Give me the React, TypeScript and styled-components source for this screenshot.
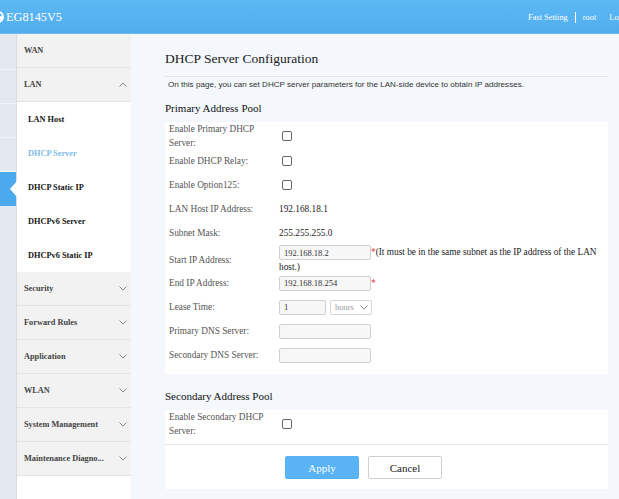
import styled, { createGlobalStyle } from "styled-components";

const GlobalStyle = createGlobalStyle`
  html, body {
    margin: 0;
    padding: 0;
  }
  body {
    background: #f4f7fb;
    font-family: "Liberation Serif", "Times New Roman", serif;
    overflow: hidden;
  }
  * {
    box-sizing: border-box;
  }
`;

const Page = styled.div`
  width: 619px;
  height: 499px;
  display: flex;
  flex-direction: column;
  overflow: hidden;
`;

const Header = styled.header`
  height: 34px;
  flex-shrink: 0;
  display: flex;
  align-items: center;
  background: linear-gradient(#5cb9f4, #51aced);
  box-shadow: inset 0 -1px 0 #6dbdf2;
  color: #fff;
  overflow: hidden;
`;

const Logo = styled.div`
  display: flex;
  align-items: center;
  font-size: 12.3px;
  svg {
    margin-left: -8px;
    margin-right: 2px;
  }
`;

const HeaderLinks = styled.div`
  margin-left: auto;
  margin-right: -21px;
  display: flex;
  align-items: center;
  font-size: 8.4px;
  white-space: nowrap;
`;

const HeaderLink = styled.span`
  padding: 0 6.5px;
`;

const Sep = styled.span`
  width: 1px;
  height: 11px;
  margin-left: 1px;
  background: #fff;
`;

const Body = styled.div`
  flex: 1;
  display: flex;
  min-height: 0;
`;

const Strip = styled.div`
  width: 17px;
  flex-shrink: 0;
  padding-top: 2px;
  background: #e3e9ee;
  border-right: 1px solid #d6dde3;
`;

const StripTile = styled.div<{ $active?: boolean }>`
  position: relative;
  height: 34px;
  border-bottom: 1px solid ${(p) => (p.$active ? "#4aa8ec" : "#f2f5f8")};
  background: ${(p) => (p.$active ? "#4ba9ee" : "transparent")};
`;

const Notch = styled.span`
  position: absolute;
  right: -1px;
  top: 50%;
  transform: translateY(-50%);
  border-right: 7px solid #fff;
  border-top: 8px solid transparent;
  border-bottom: 8px solid transparent;
`;

const Sidebar = styled.nav`
  width: 114px;
  flex-shrink: 0;
  background: #fff;
  display: flex;
  flex-direction: column;
`;

const MenuGroup = styled.div`
  height: 34px;
  flex-shrink: 0;
  display: flex;
  align-items: center;
  justify-content: space-between;
  padding: 0 4px 0 7px;
  background: #f2f2f2;
  border-bottom: 1px solid #e4e4e4;
  font-size: 8.3px;
  font-weight: bold;
  color: #444;
  white-space: nowrap;
`;

const SubItem = styled.div<{ $active?: boolean }>`
  height: 34px;
  flex-shrink: 0;
  display: flex;
  align-items: center;
  padding-left: 11px;
  font-size: 8.3px;
  font-weight: bold;
  color: ${(p) => (p.$active ? "#7dbbea" : "#141414")};
`;

const Main = styled.main`
  flex: 1;
  padding: 16px 11px 0 34px;
  background: #f4f7fb;
  overflow: hidden;
`;

const Title = styled.h1`
  margin: 0;
  padding-bottom: 8px;
  border-bottom: 1px solid #e1e5ea;
  font-size: 13.5px;
  line-height: 18px;
  font-weight: normal;
  color: #222;
`;

const Desc = styled.p`
  margin: 2px 0 0;
  padding-left: 3px;
  font-family: "Liberation Sans", Arial, sans-serif;
  font-size: 8.1px;
  line-height: 12px;
  color: #333;
`;

const SectionTitle = styled.h2<{ $top: number }>`
  margin: ${(p) => p.$top}px 0 7px;
  font-size: 11px;
  line-height: 14px;
  font-weight: normal;
  color: #111;
`;

const Panel = styled.div<{ $pad: string }>`
  background: #fff;
  padding: ${(p) => p.$pad};
`;

const Row = styled.div<{ $h?: number }>`
  display: grid;
  grid-template-columns: 110px 1fr;
  align-items: center;
  height: ${(p) => p.$h ?? 24}px;
  font-size: 9.3px;
`;

const Label = styled.div`
  color: #555;
  line-height: 14px;
`;

const Value = styled.div`
  display: flex;
  align-items: center;
  color: #222;
  line-height: 14px;
  padding-right: 6px;
`;

const WrapValue = styled.div`
  color: #222;
  line-height: 15px;
  padding-right: 6px;
`;

const Check = styled.span`
  display: inline-block;
  width: 10px;
  height: 10px;
  margin-left: 3px;
  border: 1px solid #666;
  border-radius: 2px;
  background: #fff;
`;

const TextInput = styled.input<{ $w?: number }>`
  width: ${(p) => p.$w ?? 92}px;
  height: 15px;
  padding: 0 4px;
  border: 1px solid #cfcfcf;
  border-radius: 2px;
  background: #f7f7f7;
  font-family: "Liberation Serif", "Times New Roman", serif;
  font-size: 8.5px;
  color: #333;
  vertical-align: middle;
  outline: none;
`;

const Req = styled.span`
  color: #e23a3a;
  align-self: flex-start;
`;

const SelectBox = styled.div`
  display: inline-flex;
  align-items: center;
  justify-content: space-between;
  width: 42px;
  height: 15px;
  margin-left: 4px;
  padding: 0 3px 0 4px;
  border: 1px solid #d6d6d6;
  border-radius: 2px;
  background: #fff;
  font-size: 8.5px;
  color: #999;
`;

const Actions = styled.div`
  display: flex;
  gap: 9px;
  padding: 11px 0 10px 120px;
  border-top: 1px solid #e6e6e6;
  background: #fff;
`;

const Button = styled.button<{ $primary?: boolean }>`
  width: 74px;
  height: 23px;
  border: 1px solid ${(p) => (p.$primary ? "#56b1f3" : "#cfcfcf")};
  border-radius: 2px;
  background: ${(p) => (p.$primary ? "#59b3f5" : "#fff")};
  color: ${(p) => (p.$primary ? "#fff" : "#222")};
  font-family: "Liberation Serif", "Times New Roman", serif;
  font-size: 11px;
  cursor: pointer;
`;

function Chevron({ up }: { up?: boolean }) {
  return (
    <svg width="8" height="5" viewBox="0 0 8 5">
      <polyline
        points={up ? "0.5,4.5 4,1 7.5,4.5" : "0.5,0.5 4,4 7.5,0.5"}
        fill="none"
        stroke="#8a8a8a"
        strokeWidth="1"
      />
    </svg>
  );
}

const groupsBelow = [
  "Security",
  "Forward Rules",
  "Application",
  "WLAN",
  "System Management",
  "Maintenance Diagno...",
];

const lanItems = [
  "LAN Host",
  "DHCP Server",
  "DHCP Static IP",
  "DHCPv6 Server",
  "DHCPv6 Static IP",
];

export default function App() {
  return (
    <Page>
      <GlobalStyle />
      <Header>
        <Logo>
          <svg width="12" height="12" viewBox="0 0 12 12">
            <circle cx="6" cy="6" r="5" fill="none" stroke="#fff" strokeWidth="2" />
            <circle cx="9" cy="7" r="2" fill="#fff" />
          </svg>
          EG8145V5
        </Logo>
        <HeaderLinks>
          <HeaderLink>Fast Setting</HeaderLink>
          <Sep />
          <HeaderLink>root</HeaderLink>
          <HeaderLink>Logout</HeaderLink>
        </HeaderLinks>
      </Header>
      <Body>
        <Strip>
          <StripTile />
          <StripTile />
          <StripTile />
          <StripTile />
          <StripTile $active>
            <Notch />
          </StripTile>
        </Strip>
        <Sidebar>
          <MenuGroup>
            WAN
            <span />
          </MenuGroup>
          <MenuGroup>
            LAN
            <Chevron up />
          </MenuGroup>
          {lanItems.map((item) => (
            <SubItem key={item} $active={item === "DHCP Server"}>
              {item}
            </SubItem>
          ))}
          {groupsBelow.map((g) => (
            <MenuGroup key={g}>
              {g}
              <Chevron />
            </MenuGroup>
          ))}
        </Sidebar>
        <Main>
          <Title>DHCP Server Configuration</Title>
          <Desc>
            On this page, you can set DHCP server parameters for the LAN-side
            device to obtain IP addresses.
          </Desc>
          <SectionTitle $top={10}>Primary Address Pool</SectionTitle>
          <Panel $pad="0 0 7px 4px">
            <Row $h={27}>
              <Label>
                Enable Primary DHCP
                <br />
                Server:
              </Label>
              <Value>
                <Check />
              </Value>
            </Row>
            <Row>
              <Label>Enable DHCP Relay:</Label>
              <Value>
                <Check />
              </Value>
            </Row>
            <Row>
              <Label>Enable Option125:</Label>
              <Value>
                <Check />
              </Value>
            </Row>
            <Row>
              <Label>LAN Host IP Address:</Label>
              <Value>192.168.18.1</Value>
            </Row>
            <Row>
              <Label>Subnet Mask:</Label>
              <Value>255.255.255.0</Value>
            </Row>
            <Row $h={26}>
              <Label>Start IP Address:</Label>
              <WrapValue>
                <TextInput readOnly defaultValue="192.168.18.2" />
                <Req>*</Req>(It must be in the same subnet as the IP address of
                the LAN
                <br />
                host.)
              </WrapValue>
            </Row>
            <Row>
              <Label>End IP Address:</Label>
              <Value>
                <TextInput readOnly defaultValue="192.168.18.254" />
                <Req>*</Req>
              </Value>
            </Row>
            <Row>
              <Label>Lease Time:</Label>
              <Value>
                <TextInput $w={47} readOnly defaultValue="1" />
                <SelectBox>
                  hours
                  <Chevron />
                </SelectBox>
              </Value>
            </Row>
            <Row>
              <Label>Primary DNS Server:</Label>
              <Value>
                <TextInput readOnly defaultValue="" />
              </Value>
            </Row>
            <Row>
              <Label>Secondary DNS Server:</Label>
              <Value>
                <TextInput readOnly defaultValue="" />
              </Value>
            </Row>
          </Panel>
          <SectionTitle $top={15}>Secondary Address Pool</SectionTitle>
          <Panel $pad="0 0 6px 4px">
            <Row $h={28}>
              <Label>
                Enable Secondary DHCP
                <br />
                Server:
              </Label>
              <Value>
                <Check />
              </Value>
            </Row>
          </Panel>
          <Actions>
            <Button $primary>Apply</Button>
            <Button>Cancel</Button>
          </Actions>
        </Main>
      </Body>
    </Page>
  );
}
